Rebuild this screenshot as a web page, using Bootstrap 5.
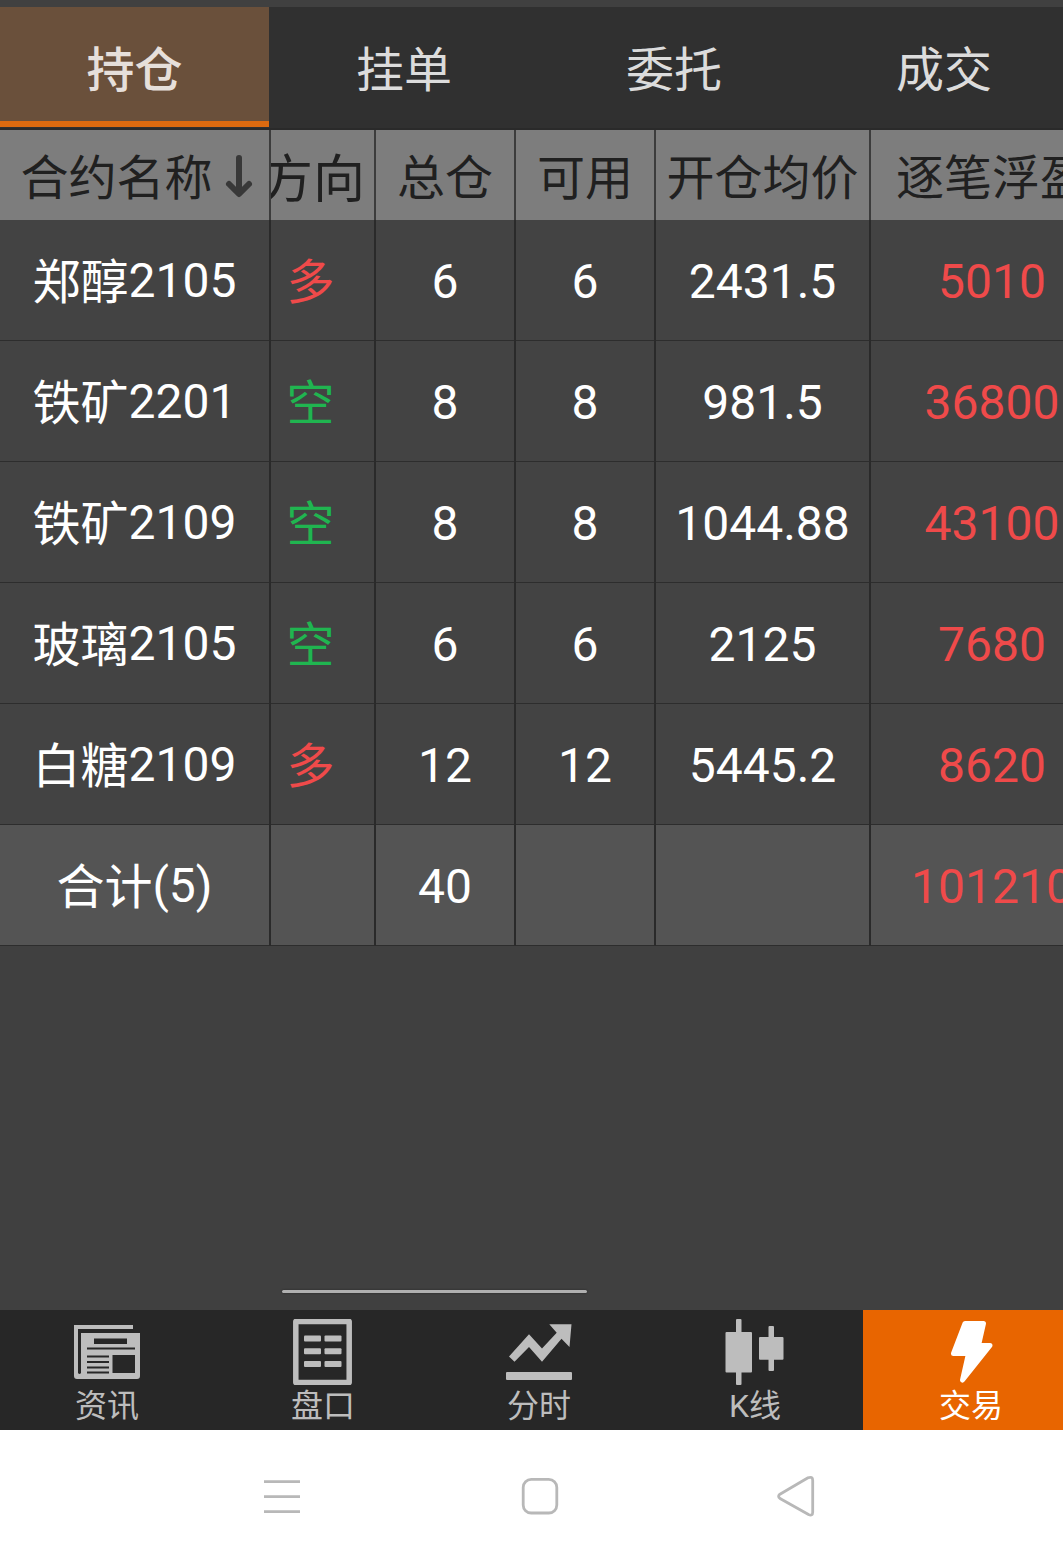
<!DOCTYPE html>
<html lang="zh-CN">
<head>
<meta charset="utf-8">
<meta name="viewport" content="width=device-width, initial-scale=1">
<title>持仓</title>
<link href="https://cdn.jsdelivr.net/npm/bootstrap@5.3.0/dist/css/bootstrap.min.css" rel="stylesheet">
<style>
body{font-family:Roboto,"Noto Sans CJK SC",sans-serif;background:#404040;width:1063px;height:1562px;overflow:hidden}
.phone{width:1080px;height:1562px;background:#404040}
.toptabs{height:123px;margin-top:7px;background:#303030;border-bottom:2px solid #2a2a2a;flex-wrap:nowrap}
.toptabs .nav-link{width:270px;height:120px;padding:0 2px 0 0;color:#dcdcdc;font-size:48px;line-height:128px;text-align:center;border-radius:0;border-bottom:0}
.toptabs .nav-link.active{width:269px;margin-right:1px;padding:0;background:#6a503b;color:#e6dfda;font-weight:500;border-bottom:6px solid #dc6a10}
.positions{width:1115px;table-layout:fixed;border-collapse:separate;border-spacing:0;margin:0}
.positions th,.positions td{padding:0;text-align:center;vertical-align:middle;font-weight:400;font-size:48px;line-height:60px;white-space:nowrap;overflow:hidden;border-right:2px solid #2a2a2a}
.positions thead th{height:90px;background:#7d7d7d;color:#202020;border-right-color:#3c3c3c;padding-top:8px}
.positions td{height:121px;background:#434343;color:#fff;border-bottom:1.5px solid #2d2d2d;padding-top:3px}
.positions tfoot td{background:#545454}
.positions .side{width:127px;margin-left:-24px;padding-top:3px}
.positions .side-head{font-size:52px;width:132px;padding-top:4px}
.positions td.gain{color:#ef4a4a}
.han{vertical-align:-1.5px}
.sorted{padding-left:6px}
.sorted svg{margin-bottom:9px}
.long{color:#ef4a4a}
.short{color:#20b550}
.hscroll{width:305px;height:3px;margin:344px 0 0 282px;background:#b0b0b0;border-radius:2px;box-shadow:0 0 2px #222}
.mainbar{height:120px;width:1081px;margin:17px 0 0 -1px;background:#272727}
.mainbar a{width:216px;color:#bdbdbd;text-decoration:none;font-size:32px;line-height:42px;padding-top:9px}
.mainbar a.current{background:#e86500;color:#fff}
.mainbar svg{width:66px;height:66px;display:block}
.sysbar{height:132px;background:#fff}
.sysbar svg{display:block;width:1080px;height:132px}
</style>
<script src="https://cdn.jsdelivr.net/npm/bootstrap@5.3.0/dist/js/bootstrap.bundle.min.js"></script>
</head>
<body>
<div class="phone d-flex flex-column">
  <nav class="nav toptabs flex-shrink-0">
    <a class="nav-link active">持仓</a><a class="nav-link">挂单</a><a class="nav-link">委托</a><a class="nav-link">成交</a>
  </nav>
  <table class="positions">
    <colgroup><col style="width:271px"><col style="width:105px"><col style="width:140px"><col style="width:140px"><col style="width:215px"><col style="width:244px"></colgroup>
    <thead>
      <tr>
        <th><div class="d-flex align-items-center justify-content-center sorted"><span>合约名称</span><svg class="ms-2" width="34" height="50" viewBox="0 0 34 50" fill="none" stroke="#383838" stroke-width="6" stroke-linecap="round" stroke-linejoin="round"><path d="M18 8V43M8 34l10 10 10-10"/></svg></div></th>
        <th><div class="side side-head">方向</div></th><th>总仓</th><th>可用</th><th>开仓均价</th><th>逐笔浮盈</th>
      </tr>
    </thead>
    <tbody>
      <tr><td><span class="han">郑醇</span>2105</td><td><div class="side long">多</div></td><td>6</td><td>6</td><td>2431.5</td><td class="gain">5010</td></tr>
      <tr><td><span class="han">铁矿</span>2201</td><td><div class="side short">空</div></td><td>8</td><td>8</td><td>981.5</td><td class="gain">36800</td></tr>
      <tr><td><span class="han">铁矿</span>2109</td><td><div class="side short">空</div></td><td>8</td><td>8</td><td>1044.88</td><td class="gain">43100</td></tr>
      <tr><td><span class="han">玻璃</span>2105</td><td><div class="side short">空</div></td><td>6</td><td>6</td><td>2125</td><td class="gain">7680</td></tr>
      <tr><td><span class="han">白糖</span>2109</td><td><div class="side long">多</div></td><td>12</td><td>12</td><td>5445.2</td><td class="gain">8620</td></tr>
    </tbody>
    <tfoot>
      <tr><td><span class="han">合计</span>(5)</td><td></td><td>40</td><td></td><td></td><td class="gain">101210</td></tr>
    </tfoot>
  </table>
  <div class="hscroll flex-shrink-0"></div>
  <nav class="mainbar d-flex flex-shrink-0">
    <a class="d-flex flex-column align-items-center">
      <svg viewBox="0 0 66 66" fill="#bdbdbd"><path d="M0 6H59V10H4V54Q5.500 56 7 54V14H66V57Q66 60 63 60H3Q0 60 0 57Z"/><path fill="#272727" d="M20 19.500H53V25H20ZM13 28.500H61V30.500H13ZM13 36.500H35V38.500H13ZM13 42H35V44H13ZM13 47.500H35V49.500H13ZM13 52.500H35V54.500H13ZM38.500 36H61V54H38.500Z"/></svg>
      <span>资讯</span></a>
    <a class="d-flex flex-column align-items-center">
      <svg viewBox="0 0 66 66" fill="#bdbdbd"><rect x="5.800" y="2.500" width="53.400" height="61" fill="none" stroke="#bdbdbd" stroke-width="5.500" stroke-linejoin="round"/><rect x="14" y="16.500" width="17" height="6" rx="1"/><rect x="34.500" y="16.500" width="17" height="6" rx="1"/><rect x="14" y="29.200" width="17" height="6" rx="1"/><rect x="34.500" y="29.200" width="17" height="6" rx="1"/><rect x="14" y="42" width="17" height="6" rx="1"/><rect x="34.500" y="42" width="17" height="6" rx="1"/></svg>
      <span>盘口</span></a>
    <a class="d-flex flex-column align-items-center">
      <svg viewBox="0 0 66 66" fill="#bdbdbd"><path d="M3 37.500L23 15.300 36 29.500 50.700 13.700 43.300 5.300H65.500L63.500 28 55.500 19.700 36 42.700 23 28 8.500 42.700Z"/><rect y="53" width="66" height="8" rx="1"/></svg>
      <span>分时</span></a>
    <a class="d-flex flex-column align-items-center">
      <svg viewBox="0 0 66 66" fill="#bdbdbd"><rect x="3.500" y="13" width="26.500" height="40.500" rx="1"/><rect x="14" width="5.500" height="66" rx="1"/><rect x="37" y="18" width="24.500" height="22.700" rx="1"/><rect x="46.500" y="7" width="5.500" height="45" rx="1"/></svg>
      <span>K线</span></a>
    <a class="d-flex flex-column align-items-center current">
      <svg viewBox="0 0 66 66" fill="#fff" stroke="#fff" stroke-width="5" stroke-linejoin="round"><path d="M27 4.500H45.500L40.500 26.500H52L24.500 61 30.500 34.500H15.500Z"/></svg>
      <span>交易</span></a>
  </nav>
  <footer class="sysbar flex-shrink-0">
    <svg viewBox="0 0 1080 132" fill="none" stroke="#b8b8b8" stroke-width="2.800" stroke-linejoin="round"><path d="M264 51.600h36M264 66.600h36M264 81.600h36"/><rect x="523.200" y="49.400" width="33.600" height="33.600" rx="8"/><path d="M779.500 64.500L808 47.800Q812.700 46 812.700 50.500V82Q812.700 86.500 808.500 84.500L780 68.500Q777.500 66.500 779.500 64.500Z"/></svg>
  </footer>
</div>
</body>
</html>
